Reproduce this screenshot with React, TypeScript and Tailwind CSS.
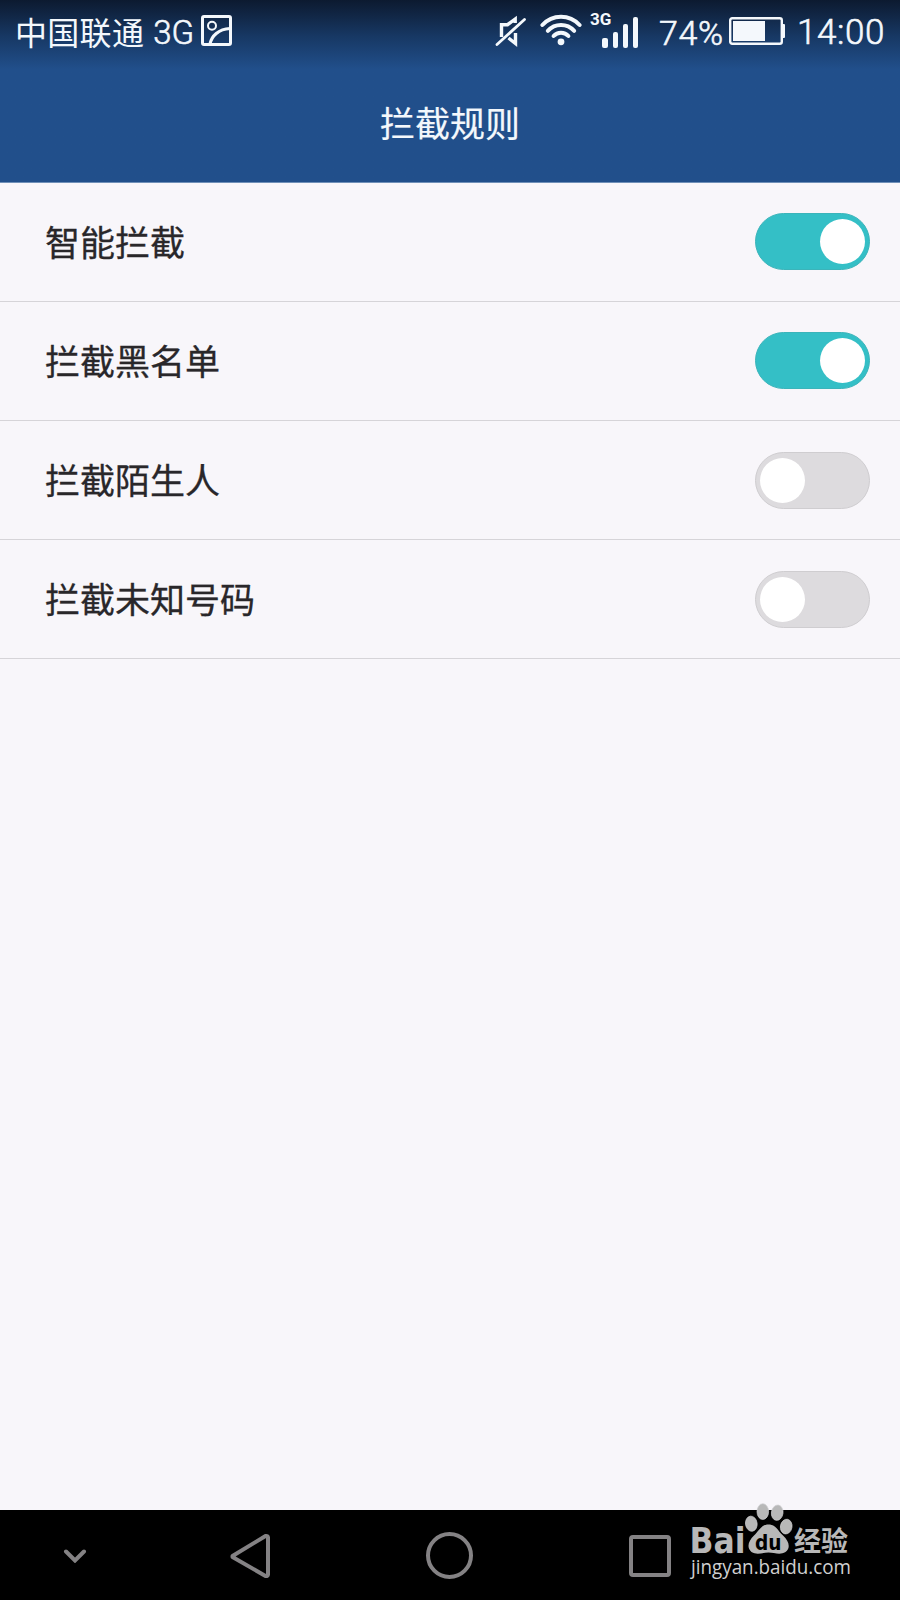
import { useState } from "react"
import { clsx } from "clsx"

interface Rule {
  id: string
  label: string
  enabled: boolean
}

const initialRules: Rule[] = [
  { id: "smart", label: "智能拦截", enabled: true },
  { id: "blacklist", label: "拦截黑名单", enabled: true },
  { id: "stranger", label: "拦截陌生人", enabled: false },
  { id: "unknown", label: "拦截未知号码", enabled: false },
]

function PictureIcon() {
  return (
    <svg width="32" height="32" viewBox="0 0 32 32" fill="none" stroke="currentColor" className="shrink-0">
      <rect x="1.5" y="1.5" width="28" height="28" rx="1.5" strokeWidth="3" />
      <circle cx="11" cy="10.8" r="4" strokeWidth="2" />
      <path d="M9 29C10.500 21 17.500 14 29 13.500" strokeWidth="3.2" />
    </svg>
  )
}

function MuteIcon() {
  return (
    <svg width="32" height="34" viewBox="0 0 32 34" fill="none" stroke="currentColor" className="shrink-0">
      <path d="M2 29.5L29.5 4.5" strokeWidth="2.8" strokeLinecap="round" />
      <path d="M6.5 22V9.7H12.500L20.2 4V8" strokeWidth="3.4" />
      <path d="M20.5 18V28.500L13.500 23" strokeWidth="3.4" />
    </svg>
  )
}

function WifiIcon() {
  return (
    <svg width="42" height="32" viewBox="0 0 42 32" fill="none" stroke="currentColor" className="shrink-0">
      <g strokeWidth="4" strokeLinecap="round">
        <path d="M2.4 11C12.5 0 29.5 0 39.6 11" />
        <path d="M7.8 16.8C15 9 27 9 34.2 16.8" />
        <path d="M13.6 22C17.5 17.5 24.5 17.5 28.4 22" />
      </g>
      <circle cx="21" cy="27.8" r="3.4" fill="currentColor" stroke="none" />
    </svg>
  )
}

function SignalIcon() {
  return (
    <div className="relative flex h-[31px] w-[38px] shrink-0 items-end gap-[5px]">
      <span className="absolute -top-[6px] -left-[12px] font-[Roboto] text-[17px] leading-[17px] font-bold">3G</span>
      <span className="h-[10px] w-[6px] rounded-[2px] bg-current" />
      <span className="h-[16px] w-[5px] rounded-[2px] bg-current" />
      <span className="h-[24px] w-[5px] rounded-[2px] bg-current" />
      <span className="h-[31px] w-[5px] rounded-[2px] bg-current" />
    </div>
  )
}

function BatteryIcon() {
  return (
    <svg width="56" height="28" viewBox="0 0 56 28" className="shrink-0">
      <rect x="1.2" y="1.2" width="51.600" height="25.600" rx="2" fill="none" stroke="currentColor" strokeWidth="2.4" />
      <rect x="4" y="4" width="32" height="20" fill="currentColor" />
      <rect x="53" y="7" width="3" height="14" rx="1" fill="currentColor" />
    </svg>
  )
}

function StatusBar() {
  return (
    <div className="flex h-16 items-center justify-between pr-[15px] pl-[15px] text-[#f4f8fc]">
      <div className="flex items-center">
        <span className="-mt-[3px] text-[32px] leading-[48px] tracking-[0.3px]">中国联通</span>
        <span className="mt-[2px] ml-[9px] w-[48px] font-[Roboto] text-[33px] leading-[48px] font-light [-webkit-text-stroke:0.6px]">
          3G
        </span>
        <div className="-mt-0.5">
          <PictureIcon />
        </div>
      </div>
      <div className="flex items-center">
        <MuteIcon />
        <div className="ml-[13px] -mt-1">
          <WifiIcon />
        </div>
        <div className="ml-[20px]">
          <SignalIcon />
        </div>
        <span className="mt-[2px] ml-[19px] w-[70px] font-[Roboto] text-[34px] leading-[48px] font-light tracking-[0.6px] [-webkit-text-stroke:0.6px]">
          74%
        </span>
        <div className="-mt-0.5">
          <BatteryIcon />
        </div>
        <span className="mt-[2px] ml-[12px] font-[Roboto] text-[35px] leading-[48px] font-light tracking-[0.6px] [-webkit-text-stroke:0.6px]">
          14:00
        </span>
      </div>
    </div>
  )
}

function Toggle({ checked, label, onChange }: { checked: boolean; label: string; onChange: () => void }) {
  return (
    <button
      type="button"
      role="switch"
      aria-checked={checked}
      aria-label={label}
      onClick={onChange}
      className={clsx(
        "flex h-[57px] w-[115px] items-center rounded-full border px-1",
        checked ? "justify-end border-[#3bb4ba] bg-[#34bfc6]" : "mt-px justify-start border-[#cfcdd0] bg-[#dddbde]",
      )}
    >
      <span className="size-[45px] rounded-full bg-white" />
    </button>
  )
}

function Watermark() {
  return (
    <svg width="180" height="100" viewBox="680 1500 180 100" className="absolute right-[40px] bottom-0">
      <g fill="#b8b8b8">
        <g stroke="#d0d0d2" strokeWidth="0.7">
          <ellipse cx="751.3" cy="1523.7" rx="5.8" ry="7.6" transform="rotate(-8 751.3 1523.7)" />
          <ellipse cx="762.8" cy="1511.6" rx="5.8" ry="7.9" />
          <ellipse cx="777.2" cy="1512.7" rx="5.8" ry="7.7" transform="rotate(8 777.2 1512.7)" />
          <ellipse cx="786.2" cy="1526.6" rx="5.8" ry="7.4" transform="rotate(10 786.2 1526.6)" />
        </g>
        <path d="M768.5 1524.5C776 1524.500 778 1531 783 1535.500C789 1541 791 1548 785.500 1552C780 1555.500 774 1552.500 768.500 1552.500C763 1552.500 757 1555.500 751.500 1552C746.500 1548 748 1541 754 1535.500C759 1531 761 1524.500 768.500 1524.500Z" />
        <text x="689.5" y="1553" fontFamily="DejaVu Sans, sans-serif" fontWeight="700" fontSize="35.5" textLength="56" lengthAdjust="spacingAndGlyphs">
          Bai
        </text>
        <text x="794" y="1551" fontFamily="Noto Sans CJK SC, sans-serif" fontWeight="700" fontSize="27" textLength="54">
          经验
        </text>
        <text x="755" y="1549.500" fill="#000" fontFamily="DejaVu Sans, sans-serif" fontWeight="700" fontSize="22" textLength="26.5" lengthAdjust="spacingAndGlyphs">
          du
        </text>
      </g>
      <text x="691" y="1574" fill="#d0d0d0" fontFamily="Open Sans, sans-serif" fontWeight="500" fontSize="19.500" textLength="160" lengthAdjust="spacingAndGlyphs">
        jingyan.baidu.com
      </text>
    </svg>
  )
}

function NavBar() {
  return (
    <nav className="relative flex h-[90px] items-center bg-black pl-[63px] text-[#848284]">
      <svg width="24" height="16" viewBox="0 0 24 16" fill="none" stroke="currentColor" strokeWidth="4" strokeLinecap="round">
        <path d="M3 4.500L12 13.500L21 4.500" />
      </svg>
      <svg width="44" height="48" viewBox="0 0 44 48" fill="none" stroke="currentColor" strokeWidth="4" strokeLinejoin="round" className="ml-[141px]">
        <path d="M4.500 25L37.500 5Q40 4.500 40 6.500V43.500Q40 45.500 37.500 45L4.500 26Z" />
      </svg>
      <div className="mt-px ml-[154px] size-[47px] rounded-full border-4 border-current" />
      <div className="mt-px ml-[156px] size-[42px] rounded-[4px] border-4 border-current" />
      <Watermark />
    </nav>
  )
}

export default function App() {
  const [rules, setRules] = useState(initialRules)

  const toggleRule = (id: string) => {
    setRules((prev) => prev.map((rule) => (rule.id === id ? { ...rule, enabled: !rule.enabled } : rule)))
  }

  return (
    <div className="flex h-[1600px] w-[900px] flex-col overflow-hidden bg-[#f8f6fa] font-['Noto_Sans_CJK_SC',sans-serif]">
      <header className="h-[183px] border-b border-[#7090b8] bg-[#214f8b] bg-linear-to-b from-[#0c1a30] via-[#173864] via-20% to-[#214f8b] to-38%">
        <StatusBar />
        <h1 className="mt-[32px] text-center text-[35px] leading-[52px] text-[#f4f8fc] [-webkit-text-stroke:0.2px]">
          拦截规则
        </h1>
      </header>
      <main className="flex-1">
        <ul>
          {rules.map((rule) => (
            <li
              key={rule.id}
              className="flex h-[119px] items-center justify-between border-b border-[#d6d4d8] pr-[30px] pb-px pl-[45px]"
            >
              <span className="-mt-px text-[35px] leading-[52px] text-[#29272a] [-webkit-text-stroke:0.3px]">
                {rule.label}
              </span>
              <Toggle checked={rule.enabled} label={rule.label} onChange={() => toggleRule(rule.id)} />
            </li>
          ))}
        </ul>
      </main>
      <NavBar />
    </div>
  )
}
